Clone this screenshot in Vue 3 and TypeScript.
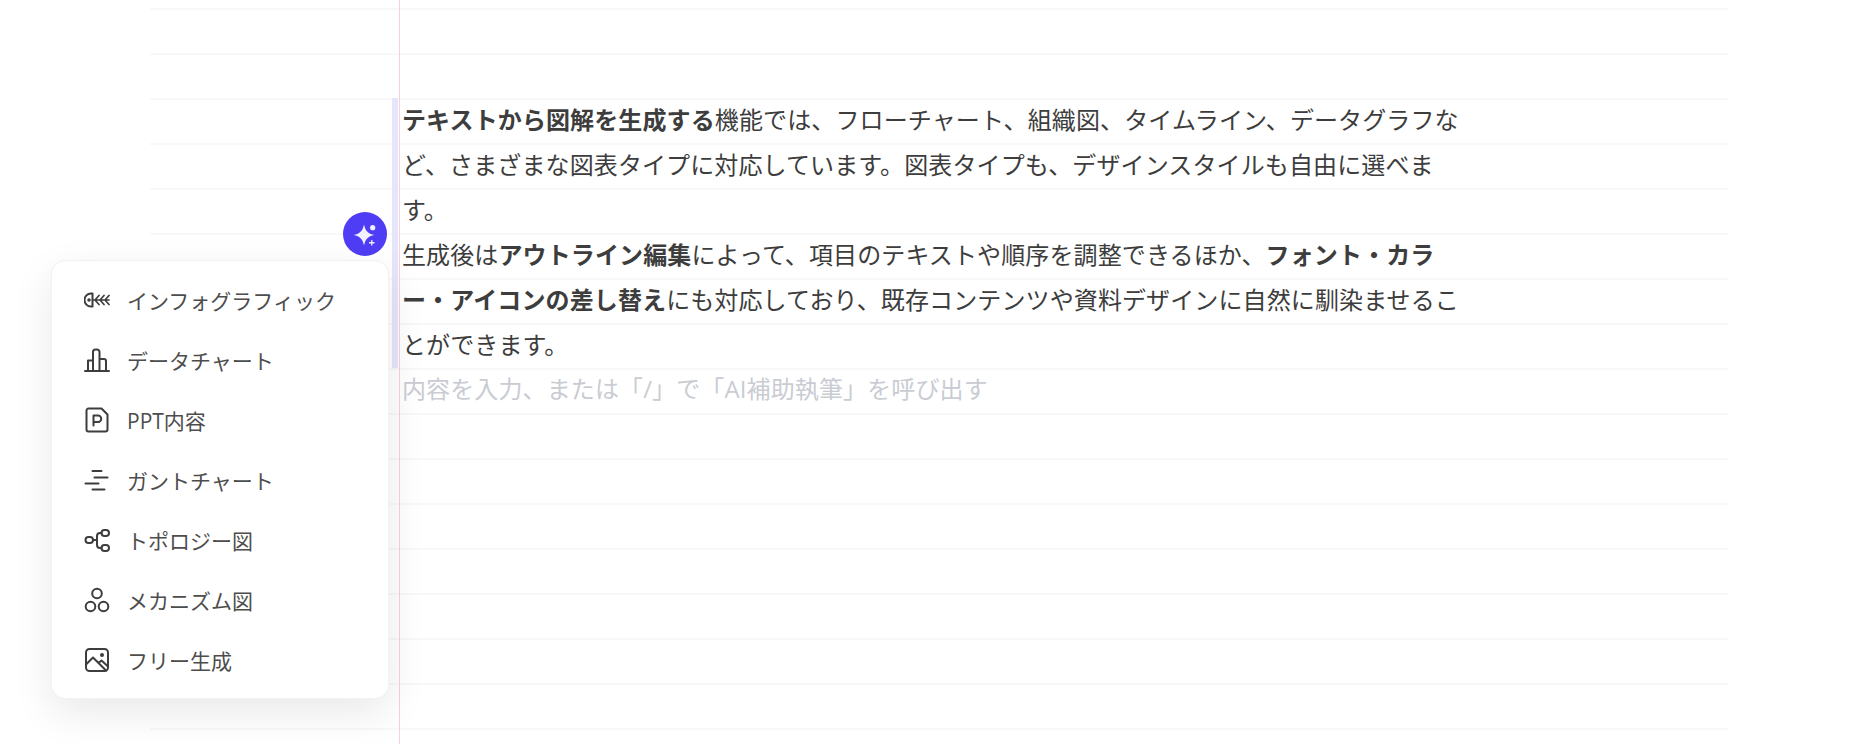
<script setup lang="ts">
interface MenuItem {
  key: string
  label: string
}

const menuItems: MenuItem[] = [
  { key: 'fish', label: 'インフォグラフィック' },
  { key: 'chart', label: 'データチャート' },
  { key: 'ppt', label: 'PPT内容' },
  { key: 'gantt', label: 'ガントチャート' },
  { key: 'topo', label: 'トポロジー図' },
  { key: 'mech', label: 'メカニズム図' },
  { key: 'free', label: 'フリー生成' }
]
</script>

<template>
  <div class="page">
    <div class="margin-line"></div>
    <div class="sheet">
      <div class="doc">
        <div class="selected">
          <p><b>テキストから図解を生成する</b>機能では、フローチャート、組織図、タイムライン、データグラフなど、さまざまな図表タイプに対応しています。図表タイプも、デザインスタイルも自由に選べます。</p>
          <p>生成後は<b>アウトライン編集</b>によって、項目のテキストや順序を調整できるほか、<b>フォント・カラー・アイコンの差し替え</b>にも対応しており、既存コンテンツや資料デザインに自然に馴染ませることができます。</p>
        </div>
        <p class="placeholder">内容を入力、または「/」で「AI補助執筆」を呼び出す</p>
      </div>
    </div>

    <button class="ai-btn" type="button" aria-label="AI">
      <svg width="28" height="28" viewBox="0 0 28 28" fill="#f1f0ff">
        <path d="M13 4.500C14.200 10.500 16.800 13.800 23.500 15C16.800 16.200 14.200 19.500 13 25.500C11.800 19.500 9.200 16.200 2.500 15C9.200 13.800 11.800 10.500 13 4.500Z" />
        <circle cx="21.700" cy="7.700" r="2.600" />
        <path d="M20.100 20h1.300v2.100h2.100v1.300h-2.100v2.100h-1.300v-2.100H18v-1.300h2.100z" />
      </svg>
    </button>

    <ul class="menu">
      <li v-for="item in menuItems" :key="item.key" class="menu-item">
        <span class="icon">
          <svg width="26" height="26" viewBox="0 0 26 26" fill="none" stroke="#3d3d3d" stroke-width="2" stroke-linecap="round" stroke-linejoin="round">
            <template v-if="item.key === 'fish'">
              <path d="M8.500 6.500H7a6.500 6.500 0 0 0 0 13h1.500z" />
              <circle cx="5" cy="13" r=".8" fill="#3d3d3d" />
              <path stroke-width="1.700" d="M8.500 13H25M15 8.500l-4 4.500 4 4.500M20 8.500l-4 4.500 4 4.500M25 8.500l-4 4.500 4 4.500" />
            </template>
            <template v-else-if="item.key === 'chart'">
              <path d="M1 24h24M4 24V13.500h5M9 24V5a2.500 2.500 0 0 1 2.500-2.500h1.500A2.500 2.500 0 0 1 15.500 5V24M15.500 12h4.500a2 2 0 0 1 2 2V24" />
            </template>
            <template v-else-if="item.key === 'ppt'">
              <path d="M4.500 1.500h13l6 6v15a2 2 0 0 1-2 2h-17a2 2 0 0 1-2-2v-19a2 2 0 0 1 2-2z" />
              <path d="M9.500 18.500V8.500h4.500a3.200 3.200 0 0 1 0 6.500H9.500" />
            </template>
            <template v-else-if="item.key === 'gantt'">
              <path d="M8.500 4h9M10.500 10.500h13M1.500 16.500h13M8.500 22.500h12" />
            </template>
            <template v-else-if="item.key === 'topo'">
              <rect x="1.500" y="10" width="7.500" height="6" rx="3" />
              <rect x="17.500" y="3" width="7.500" height="6" rx="3" />
              <rect x="17.500" y="18" width="7.500" height="6" rx="3" />
              <path d="M9 13h4M17.500 6h-1.500a3 3 0 0 0-3 3v9a3 3 0 0 0 3 3h1.500" />
            </template>
            <template v-else-if="item.key === 'mech'">
              <circle cx="13" cy="6.500" r="4.800" />
              <circle cx="6.500" cy="19.500" r="4.800" />
              <circle cx="19.500" cy="19.500" r="4.800" />
            </template>
            <template v-else>
              <rect x="2" y="2" width="22" height="22" rx="3.500" />
              <path d="M2.500 17 9 10.500 22 23.500M14.500 16l3-2.500 6 5.500" />
              <circle cx="18" cy="8" r="1" fill="#3d3d3d" />
            </template>
          </svg>
        </span>
        <span class="label">{{ item.label }}</span>
      </li>
    </ul>
  </div>
</template>

<style scoped>
.page {
  position: relative;
  width: 1857px;
  height: 744px;
  overflow: hidden;
  background: #fff;
  font-family: "Open Sans", "Noto Sans CJK JP", "Noto Sans", sans-serif;
}

.sheet {
  margin-left: 150px;
  width: 1578px;
  height: 744px;
  background-image: linear-gradient(to bottom, transparent 8px, #f8f8f9 8px, #f8f8f9 10px, transparent 10px);
  background-size: 100% 45px;
}

.margin-line {
  position: absolute;
  left: 399px;
  top: 0;
  bottom: 0;
  width: 1px;
  background: #fbd0dd;
}

.doc {
  padding: 98px 0 0 242px;
}

.selected {
  display: flow-root;
  border-left: 6px solid #e6e6fb;
  padding-left: 4px;
}

.selected p:first-child {
  margin-top: -1px;
}

.selected p:last-child {
  margin-bottom: 1px;
}

.doc p {
  width: 1070px;
  font-size: 24px;
  letter-spacing: 0.12px;
  line-height: 45px;
  color: #3d3d3d;
}

.doc > .placeholder {
  margin: -2px 0 0 10px;
  color: #c9ccd2;
}

p {
  margin: 0;
}

.ai-btn {
  position: absolute;
  left: 343px;
  top: 212px;
  width: 44px;
  height: 44px;
  padding: 0;
  border: none;
  border-radius: 50%;
  background: #4f3df5;
  display: flex;
  align-items: center;
  justify-content: center;
}

.menu {
  position: absolute;
  left: 51px;
  top: 260px;
  width: 338px;
  height: 439px;
  box-sizing: border-box;
  margin: 0;
  padding: 9px 0;
  list-style: none;
  background: #fff;
  border: 1px solid #f2f2f3;
  border-radius: 14px;
  box-shadow: 0 14px 40px rgba(0, 0, 0, 0.09);
}

.menu-item {
  display: flex;
  align-items: center;
  height: 60px;
  padding-left: 32px;
  gap: 17px;
}

.icon {
  display: flex;
  width: 26px;
  height: 26px;
}

.label {
  font-size: 21px;
  color: #4d4d4d;
}
</style>
